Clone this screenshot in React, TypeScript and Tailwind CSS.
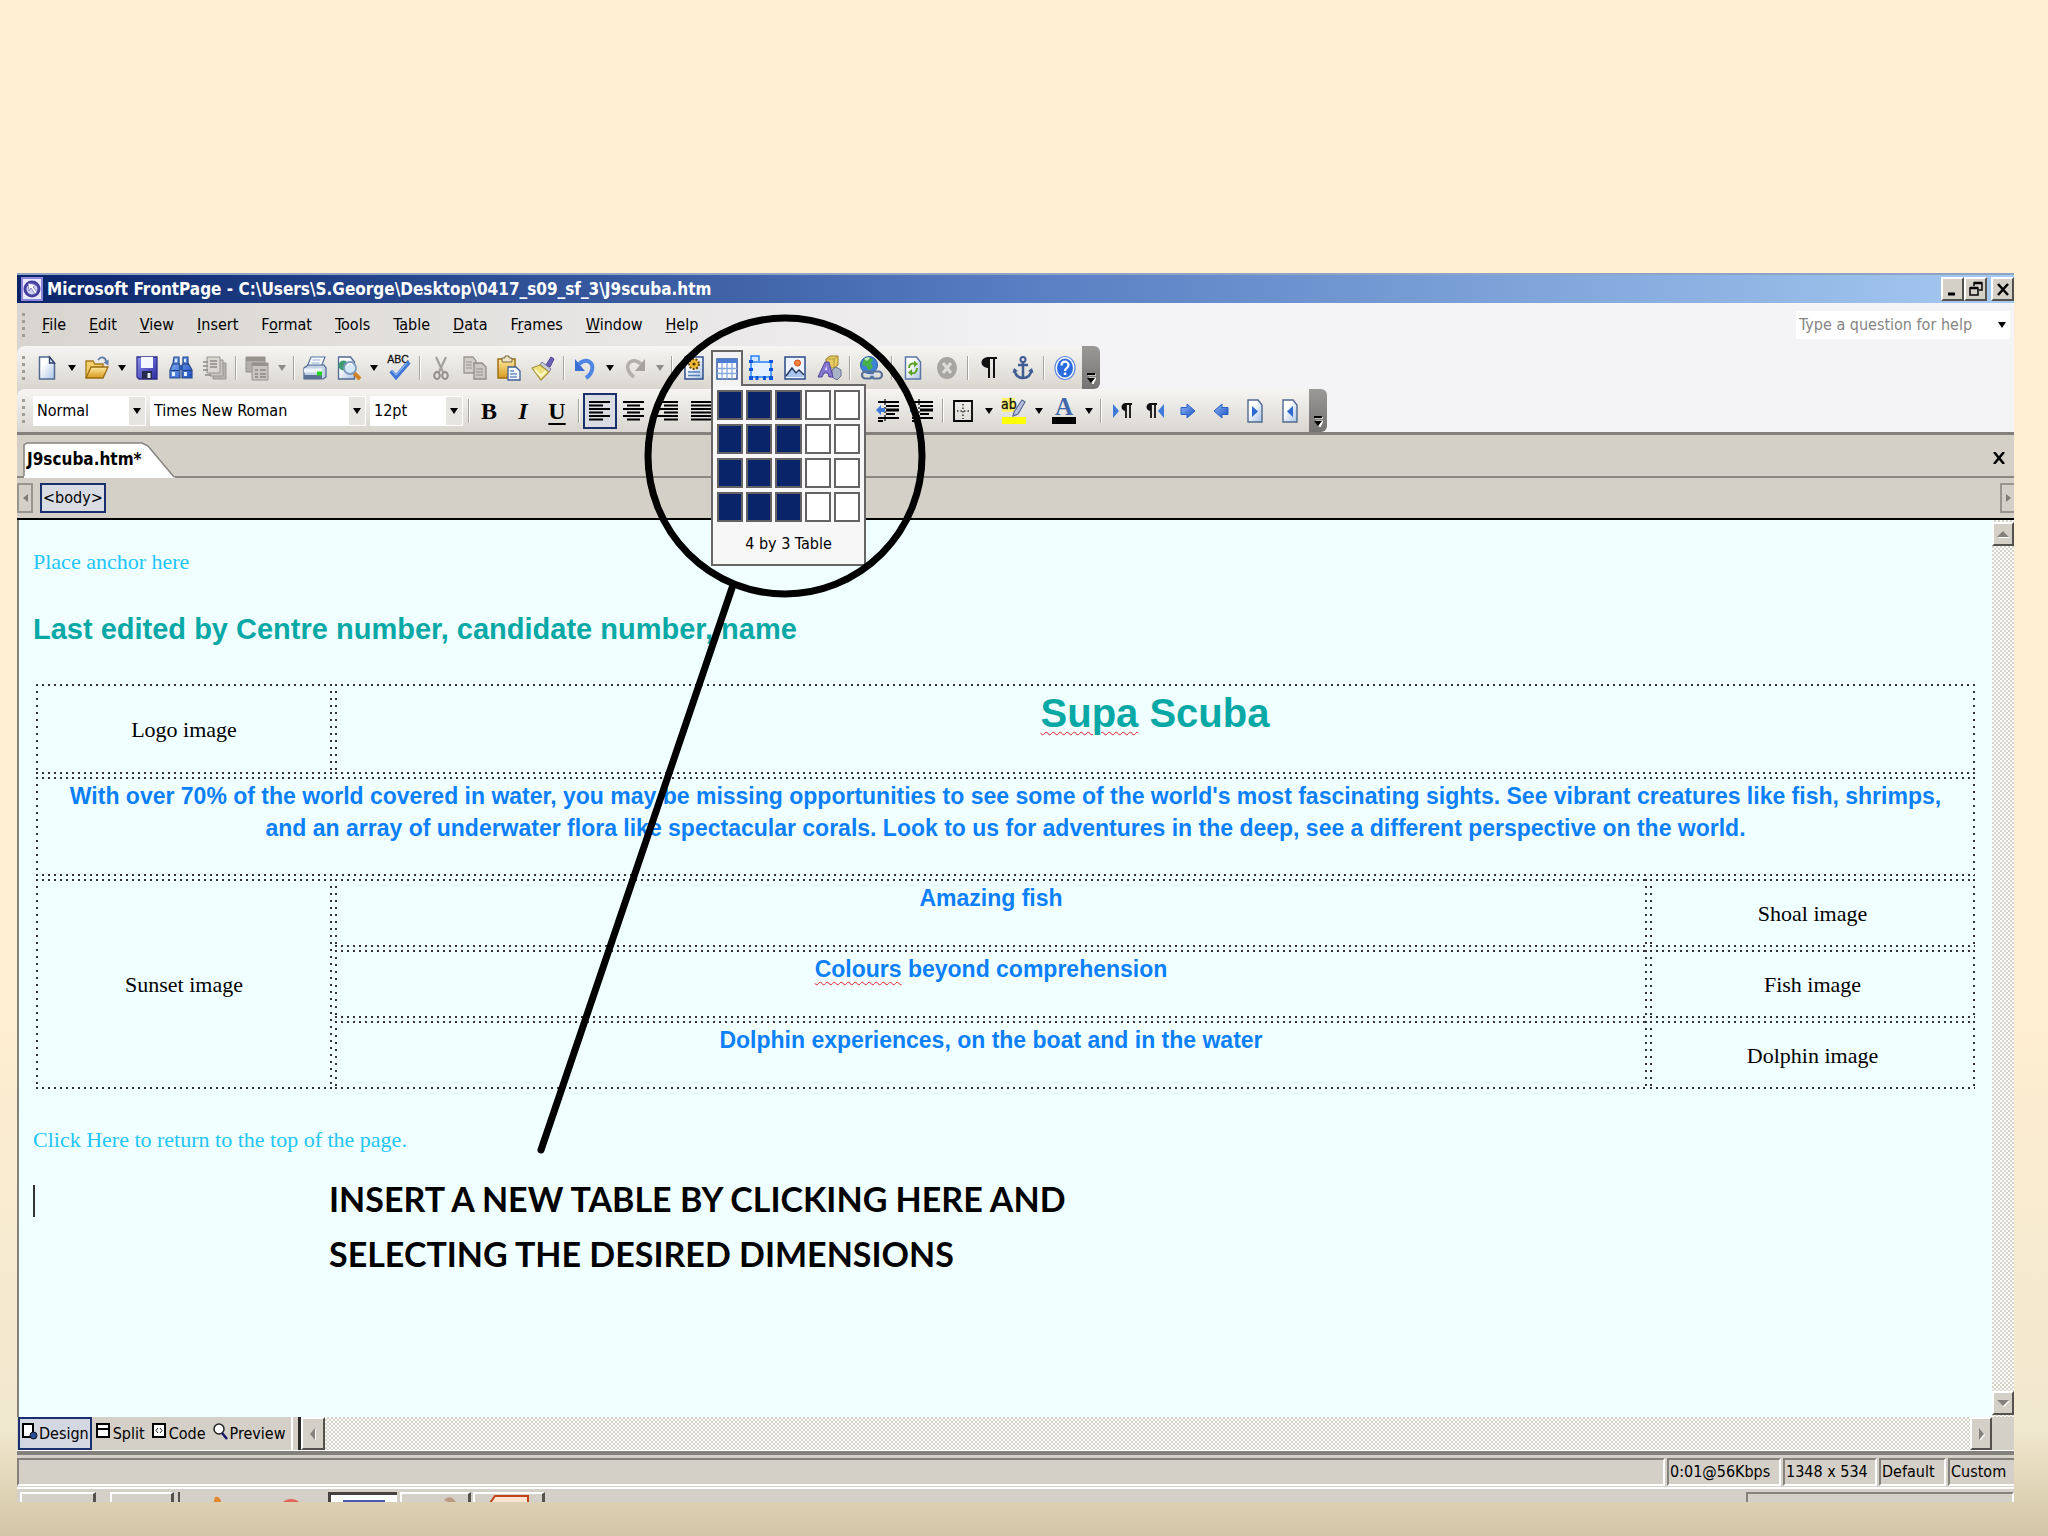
import React, { useState } from "react";
import type { ReactNode } from "react";

const UI = "font-['DejaVu_Sans_Condensed','DejaVu_Sans',sans-serif]";
const ARIAL = "font-['Liberation_Sans',sans-serif] font-bold";

function Svg({ children, className = "size-6" }: { children: ReactNode; className?: string }) {
  return (
    <svg viewBox="0 0 24 24" className={`${className} shrink-0 overflow-visible`} fill="none" aria-hidden="true">
      {children}
    </svg>
  );
}

function Gradients() {
  return (
    <svg className="absolute size-0" aria-hidden="true">
      <defs>
        <linearGradient id="paper" x1="0" y1="0" x2="1" y2="1">
          <stop offset="0.3" stopColor="#ffffff" />
          <stop offset="1" stopColor="#a9c2e6" />
        </linearGradient>
        <linearGradient id="gold" x1="0" y1="0" x2="0" y2="1">
          <stop offset="0" stopColor="#ffe9a0" />
          <stop offset="1" stopColor="#d99a1c" />
        </linearGradient>
        <linearGradient id="blue" x1="0" y1="0" x2="1" y2="1">
          <stop offset="0" stopColor="#8db8f5" />
          <stop offset="1" stopColor="#1d4fc4" />
        </linearGradient>
        <linearGradient id="violet" x1="0" y1="0" x2="1" y2="1">
          <stop offset="0" stopColor="#8f93f0" />
          <stop offset="1" stopColor="#2c2ca0" />
        </linearGradient>
      </defs>
    </svg>
  );
}

const icons: Record<string, ReactNode> = {
  new: (
    <Svg>
      <path d="M4.500 1h10l5 6v16h-15z" fill="url(#paper)" stroke="#51688f" strokeWidth="1.500" />
      <path d="M14.500 1v6h5z" fill="#dfe8f6" stroke="#2c3f66" strokeWidth="1.300" />
    </Svg>
  ),
  open: (
    <Svg>
      <path d="M1 22V5h7l2 3h8v4" fill="#f3cf6b" stroke="#a5781a" strokeWidth="1.300" />
      <path d="M1 22 6 11h17l-5 11z" fill="url(#gold)" stroke="#9a6b10" strokeWidth="1.300" />
      <path d="M13 4c3-4 7-3 8 1" stroke="#5f7ca8" strokeWidth="1.800" />
      <path d="M23.500 3.500v6l-5-3z" fill="#5f7ca8" />
    </Svg>
  ),
  save: (
    <Svg>
      <path d="M2 1h20v22H4l-2-2z" fill="url(#violet)" stroke="#2d2d8c" strokeWidth="1.300" />
      <path d="M6 1h12v11H6z" fill="#f4f7ff" />
      <path d="M7 15h10v8H7z" fill="#262a4d" />
      <path d="M12.500 17h3v5h-3z" fill="#e6e9f5" />
    </Svg>
  ),
  find: (
    <Svg>
      <path d="M5 1h5v6l1 3v12H1V14l3-7zM14 1h5v6l4 7v8H13V10l1-3z" fill="url(#blue)" stroke="#274a8c" strokeWidth="1.200" />
      <path d="M10 9h4v5h-4z" fill="#2b5aa8" />
      <path d="M3 16h3v4H3zM15 16h3v4h-3zM6 3h2v3H6zM15 3h2v3h-2z" fill="#e2efff" />
      <path d="M4 8h6M14 8h6M2 14.500h8M14 14.500h8" stroke="#1c3b78" strokeWidth="1.200" />
    </Svg>
  ),
  publish: (
    <Svg>
      <path d="M10 7h13v16H10z" fill="#b5b2ac" stroke="#98958f" />
      <path d="M7 4h13v16H7z" fill="#c9c6c0" stroke="#98958f" />
      <path d="M4 1h13v16H4z" fill="#d9d7d2" stroke="#98958f" />
      <path d="M7 5h7M7 8h7M7 11h7M0 6h5M0 10h5M0 14h5M2 19h6" stroke="#8d8a85" strokeWidth="1.400" />
    </Svg>
  ),
  pane: (
    <Svg>
      <path d="M1 1h19v15H1z" fill="#b2afaa" stroke="#95928d" />
      <path d="M7 7h16v17H7z" fill="#c8c5c0" stroke="#95928d" />
      <path d="M1 1h19v4H1zM7 7h16v3H7z" fill="#96938e" />
      <path d="M10 14h3M15 14h6M10 18h3M15 18h6M10 21h3M15 21h6" stroke="#8b8883" strokeWidth="1.500" />
    </Svg>
  ),
  print: (
    <Svg>
      <path d="M8 1h14l-4 10H4z" fill="#fdfeff" stroke="#56749f" strokeWidth="1.200" />
      <path d="M9.500 4h8M8.500 7h8" stroke="#8fabcf" strokeWidth="1.200" />
      <path d="m1 12 4-3h16l2 3v9l-3 2H1z" fill="#c5d3e6" stroke="#49648c" strokeWidth="1.200" />
      <path d="M1 12.500h18v4H1z" fill="#eef4fb" />
      <path d="M1 19h18v4H1z" fill="#5b7393" />
      <path d="M14 15.500h5v4h-5z" fill="#25d321" />
    </Svg>
  ),
  preview: (
    <Svg>
      <path d="M1.500 1h12l4 5v17h-16z" fill="url(#paper)" stroke="#51688f" strokeWidth="1.300" />
      <circle cx="6.500" cy="9.500" r="5" fill="#3f9a74" />
      <path d="m17 17 6 6" stroke="#d08124" strokeWidth="4" />
      <circle cx="13" cy="12" r="6" fill="#d3ebfa" stroke="#7f9cc0" strokeWidth="1.800" />
      <path d="M10 10c1-2 3-3 5-2" stroke="#fff" strokeWidth="1.500" />
    </Svg>
  ),
  spell: (
    <Svg>
      <text x="11" y="7" textAnchor="middle" fontSize="10.500" fontFamily="Liberation Sans" fill="#111" stroke="#111" strokeWidth="0.300">ABC</text>
      <path d="m4 15 5 6L22 6" stroke="#3d74d8" strokeWidth="4.200" />
      <path d="m4.500 14 4.500 5L20 7" stroke="#86aef3" strokeWidth="1.200" />
    </Svg>
  ),
  cut: (
    <Svg>
      <path d="m7 1 7 15M17 1l-7 15" stroke="#a4a19c" strokeWidth="2.200" />
      <ellipse cx="8" cy="19.500" rx="2.800" ry="3.500" stroke="#918e89" strokeWidth="2" />
      <ellipse cx="16" cy="19.500" rx="2.800" ry="3.500" stroke="#918e89" strokeWidth="2" />
    </Svg>
  ),
  copy: (
    <Svg>
      <path d="M1 1h9l3 4v12H1z" fill="#d2cfca" stroke="#9b9893" strokeWidth="1.300" />
      <path d="M11 7h8l4 4v12H11z" fill="#cbc8c3" stroke="#8f8c87" strokeWidth="1.300" />
      <path d="M3 6h6M3 9h6M3 12h6M13 13h7M13 16h7M13 19h7" stroke="#95928d" strokeWidth="1.200" />
    </Svg>
  ),
  paste: (
    <Svg>
      <path d="M1 3h17v19H1z" fill="url(#gold)" stroke="#9c6e16" strokeWidth="1.500" />
      <path d="M5 2h3V0h4v2h3v4H5z" fill="#efe6c9" stroke="#77663a" />
      <path d="M11 11h8l4 4v9H11z" fill="#f4f8ff" stroke="#3f5f96" strokeWidth="1.300" />
      <path d="M13 15h4M13 18h7M13 21h7" stroke="#6e8fc4" strokeWidth="1.300" />
    </Svg>
  ),
  brush: (
    <Svg>
      <path d="m15 9 5-8 3 2-4 8z" fill="#6b62b8" stroke="#4a4291" />
      <path d="m11 6 9 7-2 3-9-7z" fill="#c9cbdc" stroke="#77799a" />
      <path d="M9 9 1 12l9 12 8-8z" fill="#efe07c" stroke="#a8933a" strokeWidth="1.200" />
      <path d="m4 14 6 6 5-5" stroke="#fff9cf" strokeWidth="2" />
    </Svg>
  ),
  undo: (
    <Svg>
      <path d="M6 8c8-7 15-1 13 6-1 4-3 6-6 8" stroke="#4f86e4" strokeWidth="4" />
      <path d="M2 3v12h10z" fill="#3a70d6" />
    </Svg>
  ),
  redo: (
    <Svg>
      <path d="M18 8C10 1 3 7 5 13c1 4 3 6 6 8" stroke="#b3b0ab" strokeWidth="3.500" />
      <path d="M22 3v12H12z" fill="#a5a29d" />
    </Svg>
  ),
  component: (
    <Svg>
      <path d="M4 1h18v22H4z" fill="url(#paper)" stroke="#314f8a" strokeWidth="1.500" />
      <circle cx="13" cy="8" r="5" fill="#f0b93a" stroke="#6e4c07" strokeWidth="2" strokeDasharray="2 1.500" />
      <circle cx="13" cy="8" r="1.600" fill="#5a3d05" />
      <path d="M7 16h12M7 19.500h12" stroke="#5a80bb" strokeWidth="1.500" />
    </Svg>
  ),
  table: (
    <Svg>
      <path d="M2 2h20v20H2z" fill="#fff" stroke="#36589e" strokeWidth="1.500" />
      <path d="M2 2h20v4H2z" fill="#4c7fd4" />
      <path d="M2 11.500h20M2 16.500h20M7 6v16M12 6v16M17 6v16" stroke="#86a8dc" strokeWidth="1.300" />
    </Svg>
  ),
  layer: (
    <Svg>
      <path d="M2 6h20v15H2z" fill="#e4f0ff" stroke="#2583ff" strokeWidth="1.500" />
      <path d="M2 5V0h8v5" stroke="#2583ff" strokeWidth="1.500" fill="#cfe4ff" />
      <path d="M0 4h4v3H0zM20 4h4v3h-4zM0 12h4v3H0zM20 12h4v3h-4zM0 20h4v4H0zM6.500 20h3v4h-3zM14 20h3v4h-3zM20 20h4v4h-4z" fill="#0b54e0" />
    </Svg>
  ),
  picture: (
    <Svg>
      <path d="M2 1h20v22H2z" fill="#edf3ff" stroke="#2d4b87" strokeWidth="1.500" />
      <circle cx="14.500" cy="7" r="3" fill="#f5843a" stroke="#cf4a17" />
      <path d="m3 21 6-8 4 5 3-3 5 6z" fill="#a8c4ee" />
      <path d="m3 20 6-8 4 5 3-3 5 5" stroke="#24365f" strokeWidth="1.500" />
    </Svg>
  ),
  clipart: (
    <Svg>
      <path d="m9 3 4-3h8v9l-4 3H9z" fill="#e9cd63" stroke="#96802e" />
      <path d="M9 3h8v9M17 3l4-3" stroke="#b39a3d" />
      <path d="m15 14 4-3 5 3v6l-4 4-5-3z" fill="#a9b4c9" stroke="#66718a" />
      <path d="M1 21 8 6h4l4 15h-4l-1-4H7l-2 4z" fill="#8779d2" stroke="#50459b" />
      <path d="M8 14h2l-.5-4z" fill="#efe9ff" />
    </Svg>
  ),
  link: (
    <Svg>
      <circle cx="10" cy="9" r="8.500" fill="#3d83d8" stroke="#2a5da8" />
      <path d="M5 3c4-3 8-1 9 1l-2 3 2 4-4 4-3-5-4-1z" fill="#45b04b" />
      <path d="M5 3c3-2 5-2 6-1L8 5z" fill="#c4f0b5" />
      <rect x="3" y="15.500" width="11" height="7" rx="3.500" stroke="#587199" strokeWidth="2.200" />
      <rect x="12" y="15.500" width="11" height="7" rx="3.500" stroke="#587199" strokeWidth="2.200" />
      <path d="M9 19h8" stroke="#d8e4f5" strokeWidth="1.500" />
    </Svg>
  ),
  refresh: (
    <Svg>
      <path d="M4.500 1h11l4 5v17h-15z" fill="url(#paper)" stroke="#5b76a6" strokeWidth="1.500" />
      <path d="M8 12c0-4 3-5 6-4M16 12c0 5-3 6-6 5" stroke="#5da324" strokeWidth="2" />
      <path d="M13 4.500v7l4-3.500zM11 13v7l-4-3.500z" fill="#5da324" />
    </Svg>
  ),
  stop: (
    <Svg>
      <ellipse cx="12" cy="12" rx="10" ry="11" fill="#a7a5a1" />
      <path d="m8 7 8 10M16 7 8 17" stroke="#dddbd7" strokeWidth="3" />
    </Svg>
  ),
  pilcrow: (
    <Svg>
      <path d="M11 2h9M12 2v20M17 2v20" stroke="#111" strokeWidth="2" />
      <path d="M12 1v11C2 12 2 1 12 1z" fill="#111" />
    </Svg>
  ),
  anchor: (
    <Svg>
      <circle cx="12" cy="3.500" r="2.500" stroke="#405c92" strokeWidth="2" />
      <path d="M12 6v16M7 9h10" stroke="#405c92" strokeWidth="2.500" />
      <path d="M3.500 14c1 6 5 8 8.500 8s7.500-2 8.500-8" stroke="#405c92" strokeWidth="2.500" />
      <path d="M1.500 17 3 12l4 3zM22.500 17 21 12l-4 3z" fill="#405c92" />
    </Svg>
  ),
  help: (
    <Svg>
      <ellipse cx="12" cy="12" rx="10" ry="11.500" fill="#fff" stroke="#5d8be0" strokeWidth="1.200" />
      <ellipse cx="12" cy="12" rx="8" ry="9.500" fill="#2a6be0" />
      <path d="M8.500 9.500c0-5 7-5 7-.5 0 3-3.500 3-3.500 6" stroke="#fff" strokeWidth="2.200" />
      <path d="M10.800 16.500h2.500v2.500h-2.500z" fill="#fff" />
    </Svg>
  ),
  left: (
    <Svg>
      <path d="M1 3h21M1 6.500h14M1 10h21M1 13.500h14M1 17h21M1 20.500h14" stroke="#000" strokeWidth="1.800" />
    </Svg>
  ),
  center: (
    <Svg>
      <path d="M1 3h21M5 6.500h13M1 10h21M5 13.500h13M1 17h21M5 20.500h13" stroke="#000" strokeWidth="1.800" />
    </Svg>
  ),
  right: (
    <Svg>
      <path d="M1 3h21M8 6.500h14M1 10h21M8 13.500h14M1 17h21M8 20.500h14" stroke="#000" strokeWidth="1.800" />
    </Svg>
  ),
  justify: (
    <Svg>
      <path d="M1 3h22M1 6.500h22M1 10h22M1 13.500h22M1 17h22M1 20.500h22" stroke="#000" strokeWidth="1.800" />
    </Svg>
  ),
  outdent: (
    <Svg>
      <path d="M2 3h21M10 7h13M10 15h9M2 19h21M2 22h5" stroke="#000" strokeWidth="1.800" />
      <path d="M10 11h13" stroke="#000" strokeWidth="3" />
      <path d="M9 0v24" stroke="#000" strokeDasharray="2 2" strokeWidth="1.200" />
      <path d="M0 11 5 6v3h4v4H5v3z" fill="#3f7ad8" />
    </Svg>
  ),
  indent: (
    <Svg>
      <path d="M2 3h21M10 7h13M10 15h9M2 19h21M2 22h5" stroke="#000" strokeWidth="1.800" />
      <path d="M10 11h13" stroke="#000" strokeWidth="3" />
      <path d="M9 0v24" stroke="#000" strokeDasharray="2 2" strokeWidth="1.200" />
      <path d="M8 11 4 6v3H0v4h4v3z" fill="#3f7ad8" />
    </Svg>
  ),
  borders: (
    <Svg>
      <path d="M2 2h18v20H2z" stroke="#000" strokeWidth="1.800" />
      <path d="M11 5v15M5 12h13" stroke="#333" strokeDasharray="1.500 2" strokeWidth="1.500" />
    </Svg>
  ),
  highlight: (
    <Svg>
      <path d="M0-1h13v14H0z" fill="#fbf36e" />
      <text x="-1" y="10" fontSize="14" fontFamily="DejaVu Sans Condensed" fill="#111" stroke="#111" strokeWidth="0.300">ab</text>
      <path d="m12 13 8-12 3 2-7 12-5 2z" fill="#b9c3dd" stroke="#5a6794" strokeWidth="1.200" />
      <path d="M0 18h24v7H0z" fill="#ffff00" />
    </Svg>
  ),
  fontcolor: (
    <Svg>
      <text x="12" y="16" textAnchor="middle" fontSize="25" fontWeight="700" fontFamily="Liberation Serif" fill="#3f66ab">A</text>
      <path d="M0 18h24v7H0z" fill="#000" />
    </Svg>
  ),
  ltr: (
    <Svg>
      <path d="m3 5 6 7-6 7z" fill="#3f7ad8" />
      <path d="M15 5h7M16 5v14M20 5v14" stroke="#111" strokeWidth="1.800" />
      <path d="M16 4v8c-6 0-6-8 0-8z" fill="#111" />
    </Svg>
  ),
  rtl: (
    <Svg>
      <path d="m20 5-6 7 6 7z" fill="#3f7ad8" />
      <path d="M6 5h7M7 5v14M11 5v14" stroke="#111" strokeWidth="1.800" />
      <path d="M7 4v8c-6 0-6-8 0-8z" fill="#111" />
    </Svg>
  ),
  arrowright: (
    <Svg>
      <path d="M3 8.500h6V5l8 7-8 7v-3.500H3z" fill="url(#blue)" stroke="#2a62c8" />
    </Svg>
  ),
  arrowleft: (
    <Svg>
      <path d="M16 8.500h-6V5l-8 7 8 7v-3.500h6z" fill="url(#blue)" stroke="#2a62c8" />
    </Svg>
  ),
  pageright: (
    <Svg>
      <path d="M2 1h10l4 5v17H2z" fill="url(#paper)" stroke="#51688f" strokeWidth="1.400" />
      <path d="m6 7 6 5.500L6 18z" fill="#2d68cf" />
    </Svg>
  ),
  pageleft: (
    <Svg>
      <path d="M3 1h10l4 5v17H3z" fill="url(#paper)" stroke="#51688f" strokeWidth="1.400" />
      <path d="m13 7-6 5.500 6 5.500z" fill="#2d68cf" />
    </Svg>
  ),
};

function Tool({ name, active = false }: { name: string; active?: boolean }) {
  return (
    <button
      type="button"
      aria-label={name}
      className={`flex h-9 w-[34px] items-center justify-center ${active ? "border-2 border-[#1a2f6e] bg-[#dadce4]" : ""}`}
    >
      {icons[name]}
    </button>
  );
}

function Drop({ dim = false }: { dim?: boolean }) {
  return (
    <button type="button" aria-label="More options" className="flex h-9 w-4 items-center justify-center">
      <svg viewBox="0 0 8 6" className="h-[6px] w-2" aria-hidden="true">
        <path d="M0 0h8L4 6z" fill={dim ? "#8f8c87" : "#000"} />
      </svg>
    </button>
  );
}

function Sep() {
  return (
    <span className="flex h-6 w-2 justify-center">
      <span className="w-px bg-[#a5a29c]" />
      <span className="w-px bg-white" />
    </span>
  );
}

function Grip() {
  return (
    <span className="flex w-[13px] flex-col items-center gap-1">
      <i className="size-[3px] bg-[#a19e98]" />
      <i className="size-[3px] bg-[#a19e98]" />
      <i className="size-[3px] bg-[#a19e98]" />
      <i className="size-[3px] bg-[#a19e98]" />
    </span>
  );
}

function Overflow() {
  return (
    <button
      type="button"
      aria-label="Toolbar options"
      className="flex w-[18px] items-end justify-center self-stretch rounded-r-md bg-linear-to-b from-[#9a9998] to-[#757472] pb-1"
    >
      <svg viewBox="0 0 10 12" className="h-3 w-[10px]" aria-hidden="true">
        <path d="M2 2h8M3 5h7l-3 6z" fill="#fff" stroke="#fff" />
        <path d="M1 1h8" stroke="#000" strokeWidth="2" />
        <path d="M1 5h8l-4 5z" fill="#000" />
      </svg>
    </button>
  );
}

const fileTools = (
  "new v open v save find publish | pane d | print preview v spell | cut copy paste brush | undo v redo d | " +
  "component table layer picture clipart | link | refresh stop | pilcrow anchor | help"
).split(" ");

const formatTools = "borders v highlight v fontcolor v | ltr rtl arrowright arrowleft pageright pageleft".split(" ");

function ToolRun({ items }: { items: string[] }) {
  return (
    <>
      {items.map((item, i) => {
        if (item === "|") return <Sep key={i} />;
        if (item === "v" || item === "d") return <Drop key={i} dim={item === "d"} />;
        if (item === "table") return <TableTool key={i} />;
        return <Tool key={i} name={item} />;
      })}
    </>
  );
}

function TableTool() {
  const [size, setSize] = useState({ rows: 4, cols: 3 });
  return (
    <div className="relative z-20 w-[34px]">
      <button
        type="button"
        aria-label="Insert table"
        className="relative z-10 ml-px flex h-9 w-8 items-center justify-center border-2 border-b-0 border-[#686666] bg-[#f4f3f3]"
      >
        {icons.table}
      </button>
      <div className="absolute top-[34px] left-px w-[155px] border-2 border-[#686666] bg-[#f8f7f7] p-1">
        <div className="grid grid-cols-5 gap-x-[3px] gap-y-1">
          {Array.from({ length: 20 }, (_, i) => {
            const row = Math.floor(i / 5) + 1;
            const col = (i % 5) + 1;
            const on = row <= size.rows && col <= size.cols;
            return (
              <button
                key={i}
                type="button"
                aria-label={`${row} by ${col}`}
                onClick={() => setSize({ rows: row, cols: col })}
                className={`h-[30px] border-2 border-[#646264] ${on ? "bg-[#0a246a]" : "bg-white"}`}
              />
            );
          })}
        </div>
        <p className="pt-[10px] pb-1 text-center text-base leading-6">
          {size.rows} by {size.cols} Table
        </p>
      </div>
    </div>
  );
}

function Combo({ label, value, options, className }: { label: string; value: string; options: string[]; className: string }) {
  const [current, setCurrent] = useState(value);
  return (
    <span className={`flex h-[30px] items-stretch bg-white ${className}`}>
      <span className="relative flex w-full">
        <select
          aria-label={label}
          value={current}
          onChange={(e) => setCurrent(e.target.value)}
          className="w-full appearance-none bg-transparent pl-1 text-base outline-none"
        >
          {options.map((o) => (
            <option key={o}>{o}</option>
          ))}
        </select>
        <span className="pointer-events-none absolute inset-y-px right-px flex w-4 items-center justify-center bg-[#e6e5e2]">
          <svg viewBox="0 0 8 6" className="h-[6px] w-2" aria-hidden="true">
            <path d="M0 0h8L4 6z" />
          </svg>
        </span>
      </span>
    </span>
  );
}

const menus: [string, number][] = [
  ["File", 0], ["Edit", 0], ["View", 0], ["Insert", 0], ["Format", 1], ["Tools", 0],
  ["Table", 1], ["Data", 0], ["Frames", 1], ["Window", 0], ["Help", 0],
];

const RAISED = "border-2 border-t-white border-l-white border-r-[#55524e] border-b-[#55524e] bg-[#d4d0c8]";

function WindowButton({ label, children }: { label: string; children: ReactNode }) {
  return (
    <button type="button" aria-label={label} className={`flex h-6 w-[23px] items-center justify-center ${RAISED}`}>
      <svg viewBox="0 0 16 16" className="size-4" fill="none" stroke="#000" strokeWidth="2.500" aria-hidden="true">
        {children}
      </svg>
    </button>
  );
}

function TitleBar() {
  return (
    <header className="flex h-[30px] items-center border-t-2 border-[#8fa3c4] bg-linear-to-r from-[#0a246a] via-[#587dc2] to-[#a6caf0] pl-1">
      <svg viewBox="0 0 22 24" className="h-6 w-[22px]" fill="none" aria-hidden="true">
        <path d="M1 1h20v22H1z" fill="#e9e9fb" stroke="#8d86da" strokeWidth="2" />
        <circle cx="11" cy="12" r="7" fill="#cfd0f2" stroke="#443f9e" strokeWidth="3" />
        <path d="m7 6 8 2-3 2 4 5-2 2-4-6-2 3z" fill="#fff" stroke="#4d48a8" strokeWidth="0.600" />
      </svg>
      <h1 className="truncate pl-1 text-[17px] leading-7 font-bold text-white">
        Microsoft FrontPage - C:\Users\S.George\Desktop\0417_s09_sf_3\J9scuba.htm
      </h1>
      <div className="ml-auto flex">
        <WindowButton label="Minimize"><path d="M3 13h7" strokeWidth="3" /></WindowButton>
        <WindowButton label="Restore">
          <path d="M6 5V2h8v7h-3M2 7h8v7H2z" strokeWidth="1.500" />
          <path d="M6 2h8M2 7h8" />
        </WindowButton>
        <span className="w-1" />
        <WindowButton label="Close"><path d="m3 3 10 11M13 3 3 14" /></WindowButton>
      </div>
    </header>
  );
}

function MenuBar() {
  return (
    <nav className="flex h-[43px] items-center">
      <Grip />
      {menus.map(([name, key]) => (
        <button key={name} type="button" className="pr-[11px] pl-3 text-base">
          {name.slice(0, key)}
          <span className="underline underline-offset-2">{name[key]}</span>
          {name.slice(key + 1)}
        </button>
      ))}
      <div className="mr-1 ml-auto flex h-7 w-[214px] items-center bg-white">
        <input
          aria-label="Type a question for help"
          placeholder="Type a question for help"
          className="min-w-0 flex-1 pl-[3px] text-base outline-none placeholder:text-[#858585]"
        />
        <Drop />
      </div>
    </nav>
  );
}

const BAR = "flex w-max items-center rounded-lg bg-linear-to-b from-[#f6f5f3] to-[#d9d6cf]";
const LETTER = "w-[34px] pr-[2px] font-['Liberation_Serif',serif] text-2xl font-bold";

function Toolbars() {
  return (
    <div className="border-b-[3px] border-[#84817d]">
      <div className={`${BAR} h-[43px]`}>
        <Grip />
        <ToolRun items={fileTools} />
        <Overflow />
      </div>
      <div className={`${BAR} h-[43px]`}>
        <Grip />
        <div className="ml-[3px] flex gap-1 pr-[2px]">
          <Combo label="Style" value="Normal" options={["Normal", "Heading 1", "Heading 2"]} className="w-[113px]" />
          <Combo label="Font" value="Times New Roman" options={["Times New Roman", "Arial", "Verdana"]} className="w-[216px]" />
          <Combo label="Size" value="12pt" options={["10pt", "12pt", "14pt"]} className="w-[93px]" />
        </div>
        <Sep />
        <button type="button" className={LETTER}>B</button>
        <button type="button" className={`${LETTER} italic`}>I</button>
        <button type="button" className={`${LETTER} underline underline-offset-4`}>U</button>
        <Sep />
        <Tool name="left" active />
        <Tool name="center" />
        <Tool name="right" />
        <Tool name="justify" />
        <span className="w-[152px]" />
        <Tool name="outdent" />
        <Tool name="indent" />
        <Sep />
        <ToolRun items={formatTools} />
        <Overflow />
      </div>
    </div>
  );
}

function TabStrip() {
  return (
    <>
      <div className="flex h-[43px] items-end border-b-2 border-[#8b8883] bg-[#d4d0c8]">
        <div className="relative ml-[6px] h-[34px] w-[152px]">
          <svg viewBox="0 0 152 34" preserveAspectRatio="none" className="absolute inset-0 size-full overflow-visible" aria-hidden="true">
            <path d="M1 36V3l3-2h115l6 3 27 32z" fill="#fff" />
            <path d="M1 34V3l3-2h115l6 3 26 31" fill="none" stroke="#86837e" strokeWidth="1.500" />
          </svg>
          <button type="button" className="relative pl-1 text-[17px] leading-[34px] font-bold">J9scuba.htm*</button>
        </div>
        <button type="button" aria-label="Close document" className="mr-[9px] mb-3 ml-auto">
          <svg viewBox="0 0 12 12" className="size-3" stroke="#000" strokeWidth="2.500" aria-hidden="true">
            <path d="m1 0 10 12M11 0 1 12" />
          </svg>
        </button>
      </div>
      <div className="flex h-[42px] items-center border-b-2 border-black bg-[#d4d0c8]">
        <button type="button" aria-label="Previous tags" className="flex h-[30px] w-4 items-center justify-center border-2 border-[#98958f]">
          <svg viewBox="0 0 5 8" className="h-2 w-[5px]" aria-hidden="true"><path d="M5 0v8L0 4z" fill="#807d78" /></svg>
        </button>
        <button type="button" className="ml-[7px] h-[30px] border-2 border-[#1a2f6e] bg-[#dadce4] px-px text-base leading-6">&lt;body&gt;</button>
        <button type="button" aria-label="Next tags" className="ml-auto flex h-[30px] w-[14px] items-center justify-center border-2 border-r-0 border-[#98958f]">
          <svg viewBox="0 0 5 8" className="h-2 w-[5px]" aria-hidden="true"><path d="M0 0v8l5-4z" fill="#807d78" /></svg>
        </button>
      </div>
    </>
  );
}

const CELL =
  "bg-no-repeat bg-[image:repeating-linear-gradient(90deg,#333_0_2px,transparent_2px_6px),repeating-linear-gradient(90deg,#333_0_2px,transparent_2px_6px),repeating-linear-gradient(180deg,#333_0_2px,transparent_2px_7px),repeating-linear-gradient(180deg,#333_0_2px,transparent_2px_7px)] bg-[length:100%_2px,100%_2px,2px_100%,2px_100%] bg-[position:top,bottom,left,right]";
const IMG = `${CELL} text-center align-middle font-['Liberation_Serif',serif] text-[22px] font-normal`;
const BLUE = `${CELL} ${ARIAL} px-6 pt-[3px] text-center align-top text-[23px] leading-8 text-[#0c7ffb]`;
const SPELLING = "underline decoration-[#e0202a] decoration-wavy decoration-1 underline-offset-4";

function DocumentPage() {
  return (
    <main className="min-w-0 flex-1 border-l-2 border-[#84817d] bg-[#f0ffff] px-[14px] pt-[29px]">
      <p className="font-['Liberation_Serif',serif] text-[22px] leading-[26px] text-[#22c5fa]">Place anchor here</p>
      <h2 className={`${ARIAL} mt-8 text-[29px] leading-11 text-[#08a8a6]`}>
        Last edited by Centre number, candidate number, name
      </h2>
      <table className="mt-[30px] w-full table-fixed border-separate border-spacing-[3px]">
        <colgroup>
          <col className="w-[296px]" />
          <col />
          <col className="w-[325px]" />
        </colgroup>
        <tbody>
          <tr className="h-[90px]">
            <td className={IMG}>Logo image</td>
            <td colSpan={2} className={`${CELL} ${ARIAL} text-center align-top text-[40px] leading-[58px] text-[#08a8a6]`}>
              <span className={SPELLING}>Supa</span> Scuba
            </td>
          </tr>
          <tr className="h-[99px]">
            <td colSpan={3} className={BLUE}>
              With over 70% of the world covered in water, you may be missing opportunities to see some of the world's most
              fascinating sights. See vibrant creatures like fish, shrimps, and an array of underwater flora like spectacular
              corals. Look to us for adventures in the deep, see a different perspective on the world.
            </td>
          </tr>
          <tr className="h-[68px]">
            <td rowSpan={3} className={IMG}>Sunset image</td>
            <td className={BLUE}>Amazing fish</td>
            <td className={IMG}>Shoal image</td>
          </tr>
          <tr className="h-[68px]">
            <td className={BLUE}><span className={SPELLING}>Colours</span> beyond comprehension</td>
            <td className={IMG}>Fish image</td>
          </tr>
          <tr className="h-[68px]">
            <td className={BLUE}>Dolphin experiences, on the boat and in the water</td>
            <td className={IMG}>Dolphin image</td>
          </tr>
        </tbody>
      </table>
      <p className="mt-[35px] font-['Liberation_Serif',serif] text-[22px] leading-[26px] text-[#22c5fa]">
        Click Here to return to the top of the page.
      </p>
      <div className="mt-8 h-8 w-[2px] bg-[#333]" />
    </main>
  );
}

const TRACK = "bg-[#e9e7e3] bg-[image:repeating-conic-gradient(#d6d3cb_0_25%,#fbfbf8_0_50%)] bg-[length:4px_4px]";

function ScrollArrow({ label, d, className }: { label: string; d: string; className: string }) {
  return (
    <button type="button" aria-label={label} className={`flex items-center justify-center ${RAISED} ${className}`}>
      <svg viewBox="0 0 12 12" className="size-3" aria-hidden="true">
        <path d={d} fill="#fff" transform="translate(1 1)" />
        <path d={d} fill="#85827d" />
      </svg>
    </button>
  );
}

const views: [string, ReactNode][] = [
  ["Design", <><path d="M1 1h10v13H1z" fill="#fff" stroke="#000" strokeWidth="2" /><circle cx="11.500" cy="12.500" r="3.500" fill="#27509c" stroke="#111" /></>],
  ["Split", <path d="M1 1h12v13H1zM1 6h12" fill="#fff" stroke="#000" strokeWidth="2" />],
  ["Code", <><path d="M1 1h12v13H1z" fill="#fff" stroke="#000" strokeWidth="2" /><path d="M6 5 4 7.500 6 10M8 5l2 2.500L8 10" fill="none" stroke="#222" /></>],
  ["Preview", <><circle cx="6" cy="6" r="5" fill="#fff" stroke="#222" strokeWidth="1.500" /><path d="m9 10 5 6" stroke="#15156b" strokeWidth="2.500" /></>],
];

function ViewBar() {
  return (
    <div className="flex h-[33px] bg-[#d4d0c8] pl-px">
      <div className="flex">
        {views.map(([name, icon], i) => (
          <button
            key={name}
            type="button"
            className={`flex items-center gap-px border-2 pr-px pl-[2px] text-base ${i === 0 ? "border-[#1a2f6e] bg-[#d3d7e1]" : "border-transparent"}`}
          >
            <svg viewBox="0 0 16 17" className="mb-1 h-[17px] w-4" aria-hidden="true">{icon}</svg>
            {name}
          </button>
        ))}
      </div>
      <span className="ml-[3px] w-1 border-l-2 border-white" />
      <span className="ml-[3px] w-[3px] bg-[#2c2b2a]" />
      <ScrollArrow label="Scroll left" d="M8 0v12L3 6z" className="w-6" />
      <div className={`flex-1 ${TRACK}`} />
      <ScrollArrow label="Scroll right" d="M4 0v12l5-6z" className="w-[22px]" />
      <span className="w-[22px]" />
    </div>
  );
}

const SUNK = "border-2 border-t-[#85827d] border-l-[#85827d] border-r-white border-b-white";

function StatusBar() {
  return (
    <footer className="mt-[3px] flex h-7 gap-[2px] text-base leading-6">
      <span className={`flex-1 ${SUNK}`} />
      <span className={`w-[114px] pl-px ${SUNK}`}>0:01@56Kbps</span>
      <span className={`w-[94px] pl-px ${SUNK}`}>1348 x 534</span>
      <span className={`w-[67px] pl-px ${SUNK}`}>Default</span>
      <span className={`w-[66px] border-r-0! pl-px ${SUNK}`}>Custom</span>
    </footer>
  );
}

function Taskbar() {
  const edge = "border-t-2 border-l-2 border-r-[3px] border-t-white border-l-white border-r-[#55524e]";
  return (
    <div className="flex h-[14px] items-stretch overflow-hidden border-t border-white pt-[3px] pl-[3px]">
      <span className={`w-[76px] ${edge}`} />
      <span className={`ml-[14px] w-[64px] ${edge}`} />
      <span className="ml-1 w-[2px] bg-[#55524e]" />
      <svg viewBox="0 0 148 10" className="h-[10px] w-[148px]" aria-hidden="true">
        <path d="M34 10c0-4 1-6 4-5 2 1 3 3 3 5z" fill="#e5862a" />
        <path d="M103 10c4-4 12-4 16 0z" fill="#e0665a" />
      </svg>
      <span className="flex w-[69px] items-end border-t-[3px] border-l-[3px] border-[#45423f] bg-white px-3">
        <span className="h-[2px] w-full bg-[#4a58b5]" />
      </span>
      <span className={`ml-[3px] flex w-[71px] justify-end pr-3 ${edge}`}>
        <svg viewBox="0 0 12 8" className="h-2 w-3" aria-hidden="true"><path d="M0 6c4-4 8-4 12 2H4z" fill="#bd9a80" /></svg>
      </span>
      <span className={`ml-[2px] flex w-[72px] justify-center ${edge}`}>
        <svg viewBox="0 0 40 8" className="h-2 w-10" aria-hidden="true"><path d="M1 9 6 2h33v7z" fill="#fbe5d2" stroke="#c0441c" strokeWidth="2" /></svg>
      </span>
      <span className="ml-auto w-[268px] border-2 border-b-0 border-[#85827d] border-r-white" />
    </div>
  );
}

function Annotation() {
  return (
    <>
      <svg viewBox="0 0 1200 1300" className="pointer-events-none absolute top-0 left-0 z-30 h-[1300px] w-[1200px]" fill="none" stroke="#000" aria-hidden="true">
        <ellipse cx="785" cy="456" rx="137" ry="138" strokeWidth="7" />
        <path d="M732 588 541 1150" strokeWidth="7" strokeLinecap="round" />
      </svg>
      <p className="absolute top-[1171px] left-[329px] font-['Lato','Open_Sans',sans-serif] text-[34px] leading-[55px] font-bold whitespace-nowrap text-black">
        INSERT A NEW TABLE BY CLICKING HERE AND
        <br />
        SELECTING THE DESIRED DIMENSIONS
      </p>
    </>
  );
}

export default function App() {
  return (
    <div className={`${UI} relative min-h-screen bg-linear-to-b from-[#ffeed2] from-65% via-[#f0e8cf] via-93% to-[#d3c6a5] pt-[273px] pr-[34px] pb-[34px] pl-[17px] text-black`}>
      <Gradients />
      <div className="bg-[#d4d0c8]">
        <TitleBar />
        <div className="bg-linear-to-r from-[#d8d5cf] to-[#f4f3f6] to-55%">
          <MenuBar />
          <Toolbars />
        </div>
        <TabStrip />
        <div className="flex min-h-[897px]">
          <DocumentPage />
          <div className={`flex w-[22px] flex-col justify-between py-[2px] ${TRACK}`}>
            <ScrollArrow label="Scroll up" d="M0 9h12L6 3z" className="h-6" />
            <ScrollArrow label="Scroll down" d="M0 3h12L6 9z" className="h-6" />
          </div>
        </div>
        <ViewBar />
        <div className="h-[5px] border-t border-white bg-[#84817d]" />
        <StatusBar />
        <div className="mt-px h-px bg-white" />
        <Taskbar />
      </div>
      <Annotation />
    </div>
  );
}
